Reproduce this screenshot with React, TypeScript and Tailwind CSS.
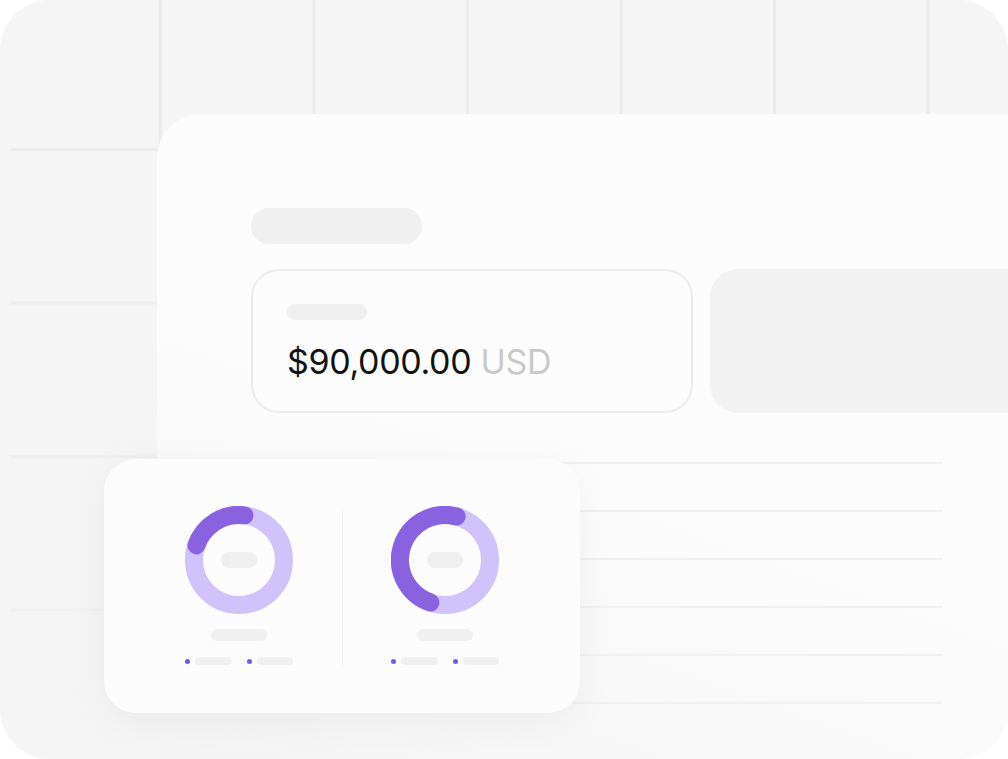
import React from 'react';

const R = 45;
const C = 54;

function pt(deg: number) {
  const a = ((deg - 90) * Math.PI) / 180;
  return `${(C + R * Math.cos(a)).toFixed(2)} ${(C + R * Math.sin(a)).toFixed(2)}`;
}

// arc drawn clockwise from `from` to `to`, degrees measured from 12 o'clock
function arc(from: number, to: number) {
  const sweep = (to - from + 360) % 360;
  const large = sweep > 180 ? 1 : 0;
  return `M ${pt(from)} A ${R} ${R} 0 ${large} 1 ${pt(to)}`;
}

function Donut({ from, to }: { from: number; to: number }) {
  return (
    <svg width="108" height="108" viewBox="0 0 108 108" className="shrink-0">
      <circle cx={C} cy={C} r={R} fill="none" stroke="#d0c2fb" strokeWidth="18" />
      <path d={arc(from, to)} fill="none" stroke="#8a62e0" strokeWidth="18" strokeLinecap="round" />
    </svg>
  );
}

function ChartColumn({ from, to }: { from: number; to: number }) {
  return (
    <div className="flex flex-1 flex-col items-center">
      <div className="relative flex h-[108px] w-[108px] items-center justify-center">
        <Donut from={from} to={to} />
        <div className="absolute h-4 w-9 rounded-full bg-[#efefef]" />
      </div>
      <div className="mt-[15px] h-3 w-14 rounded-full bg-[#f0f0f0]" />
      <div className="mt-4 flex items-center gap-[15px]">
        <div className="flex items-center gap-[5px]">
          <span className="h-[5px] w-[5px] rounded-full bg-[#7b57dc]" />
          <span className="h-2 w-[37px] rounded-full bg-[#f0f0f0]" />
        </div>
        <div className="flex items-center gap-[5px]">
          <span className="h-[5px] w-[5px] rounded-full bg-[#7b57dc]" />
          <span className="h-2 w-[36px] rounded-full bg-[#f0f0f0]" />
        </div>
      </div>
    </div>
  );
}

export default function App() {
  return (
    <div className="min-h-screen bg-white">
      <div className="relative flex h-[759px] w-[1008px] overflow-hidden rounded-[50px] bg-[#f5f5f5] bg-[linear-gradient(to_right,#f5f5f5_10px,transparent_10px),linear-gradient(to_bottom,rgba(245,245,245,0)_30%,rgba(245,245,245,0.65)),linear-gradient(to_right,#ebebeb_3px,transparent_3px),linear-gradient(to_bottom,#ececec_3px,transparent_3px)] bg-[length:100%_100%,100%_100%,153.5px_153.5px,153.5px_153.5px] bg-[position:0_0,0_0,5.5px_-5.5px,5.5px_-5.5px]">
        {/* main panel */}
        <div className="ml-[157px] mt-[114px] flex flex-1 flex-col overflow-hidden rounded-tl-[44px] bg-[linear-gradient(200deg,#fcfcfc_55%,#f4f4f4)] pl-[94px] pt-[94px]">
          <div className="h-9 w-[171px] rounded-full bg-[#f0f0f0]" />

          <div className="mt-[25px] flex gap-[17px]">
            <div className="h-[144px] w-[442px] shrink-0 rounded-[28px] border-2 border-[#ebebeb] bg-[#fcfcfc] px-[34px] pt-[33px]">
              <div className="h-4 w-20 rounded-full bg-[#efefef]" />
              <p className="mt-[22px] font-['Inter',sans-serif] text-[34px] leading-[40px] tracking-[-0.01em] text-[#111]">
                $90,000.00 <span className="text-[#c9c9c9]">USD</span>
              </p>
            </div>
            <div className="h-[144px] w-[400px] shrink-0 rounded-[28px] bg-[#f2f2f2]" />
          </div>

          <div className="mt-[49px] flex w-[692px] flex-col gap-[46px]">
            {[0, 1, 2, 3, 4, 5].map((i) => (
              <div key={i} className="h-[2px] bg-[#f0f0f0]" />
            ))}
          </div>
        </div>

        {/* floating chart card */}
        <div className="absolute left-[104px] top-[459px] flex h-[254px] w-[476px] rounded-[32px] bg-[#fcfcfc] px-8 py-[47px] shadow-[0_8px_40px_rgba(0,0,0,0.05)]">
          <ChartColumn from={289} to={7} />
          <div className="w-px bg-[#f3f3f3]" />
          <ChartColumn from={199} to={15} />
        </div>
      </div>
    </div>
  );
}
